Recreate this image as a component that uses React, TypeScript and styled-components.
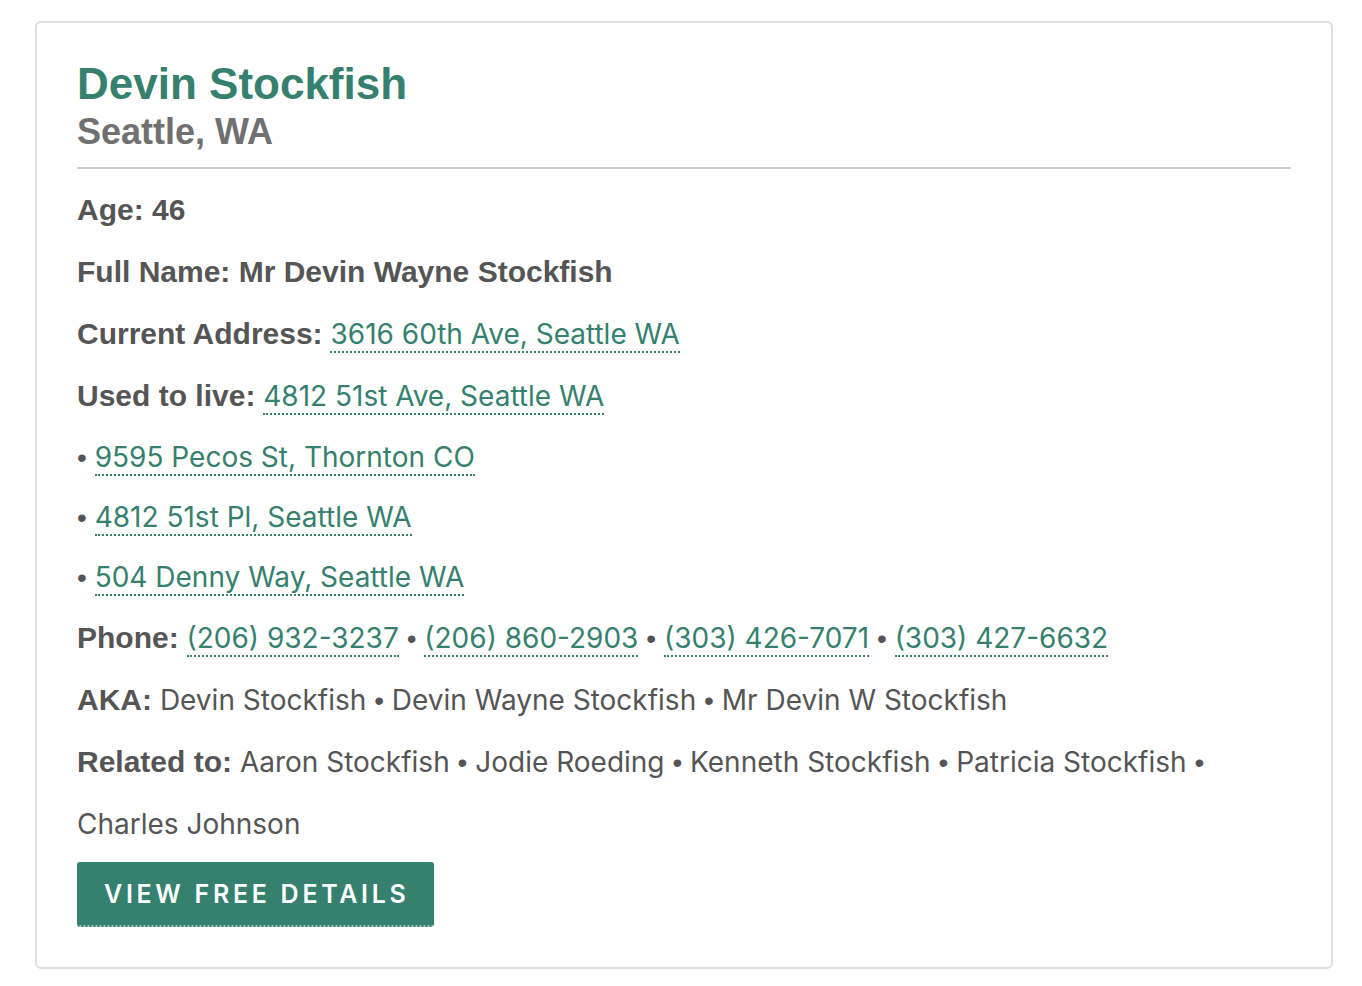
import React from "react";
import styled, { createGlobalStyle } from "styled-components";

const Global = createGlobalStyle`
  html, body { margin: 0; padding: 0; background: #fff; }
  body { padding: 21px 28px 16px 35px; font-family: Inter, "Noto Sans", sans-serif; }
`;

const GREEN = "#35806f";

const Card = styled.div`
  width: 1298px;
  box-sizing: border-box;
  border: 2px solid #e0e0e0;
  border-radius: 6px;
  padding: 34px 40px 40px 40px;
  color: #555;
`;

const Header = styled.div`
  border-bottom: 2px solid #cccccc;
  padding-bottom: 14px;
  margin-bottom: 10px;
`;

const Name = styled.h1`
  margin: 0;
  font-family: "Liberation Sans", Arial, sans-serif;
  font-weight: 700;
  font-size: 44px;
  line-height: 54px;
  color: ${GREEN};
`;

const City = styled.h2`
  margin: 0;
  font-family: "Liberation Sans", Arial, sans-serif;
  font-weight: 700;
  font-size: 36px;
  line-height: 42px;
  color: #707070;
`;

const Row = styled.div<{ $compact?: boolean }>`
  font-size: 28px;
  line-height: ${(p) => (p.$compact ? "60px" : "62px")};
  color: #555;
`;

const Label = styled.span`
  font-family: "Liberation Sans", Arial, sans-serif;
  font-weight: 700;
  font-size: 30px;
  line-height: 1;
  color: #555;
`;

const Link = styled.a`
  color: ${GREEN};
  text-decoration: none;
  border-bottom: 2px dotted ${GREEN};
  cursor: pointer;
`;

const Bullet = styled.span`
  font-family: "Liberation Sans", Arial, sans-serif;
  font-size: 28px;
  line-height: 1;
`;

const Button = styled.a`
  display: inline-block;
  margin-top: 7px;
  background: ${GREEN};
  color: #fff;
  font-family: Inter, sans-serif;
  font-weight: 600;
  font-size: 25px;
  letter-spacing: 3.7px;
  padding: 0 24px 0 27px;
  height: 65px;
  line-height: 65px;
  border-radius: 3px;
  border-bottom: 2px dotted #ffffff88;
  box-sizing: border-box;
  text-decoration: none;
`;

const Sep = () => <> <Bullet>•</Bullet> </>;

export default function App() {
  const phones = ["(206) 932-3237", "(206) 860-2903", "(303) 426-7071", "(303) 427-6632"];
  const past = ["9595 Pecos St, Thornton CO", "4812 51st Pl, Seattle WA", "504 Denny Way, Seattle WA"];
  const aka = ["Devin Stockfish", "Devin Wayne Stockfish", "Mr Devin W Stockfish"];
  const related = ["Aaron Stockfish", "Jodie Roeding", "Kenneth Stockfish", "Patricia Stockfish", "Charles Johnson"];
  return (
    <>
      <Global />
      <Card>
        <Header>
          <Name>Devin Stockfish</Name>
          <City>Seattle, WA</City>
        </Header>
        <Row><Label>Age: 46</Label></Row>
        <Row><Label>Full Name: Mr Devin Wayne Stockfish</Label></Row>
        <Row><Label>Current Address:</Label> <Link>3616 60th Ave, Seattle WA</Link></Row>
        <Row><Label>Used to live:</Label> <Link>4812 51st Ave, Seattle WA</Link></Row>
        {past.map((p) => (
          <Row $compact key={p}><Bullet>•</Bullet> <Link>{p}</Link></Row>
        ))}
        <Row>
          <Label>Phone:</Label>{" "}
          {phones.map((p, i) => (
            <React.Fragment key={p}>
              {i > 0 && <Sep />}
              <Link>{p}</Link>
            </React.Fragment>
          ))}
        </Row>
        <Row>
          <Label>AKA:</Label>{" "}
          {aka.map((n, i) => (
            <React.Fragment key={n}>
              {i > 0 && <Sep />}
              {n}
            </React.Fragment>
          ))}
        </Row>
        <Row>
          <Label>Related to:</Label>{" "}
          {related.map((n, i) => (
            <React.Fragment key={n}>
              {i > 0 && <Sep />}
              {n}
            </React.Fragment>
          ))}
        </Row>
        <Button>VIEW FREE DETAILS</Button>
      </Card>
    </>
  );
}
